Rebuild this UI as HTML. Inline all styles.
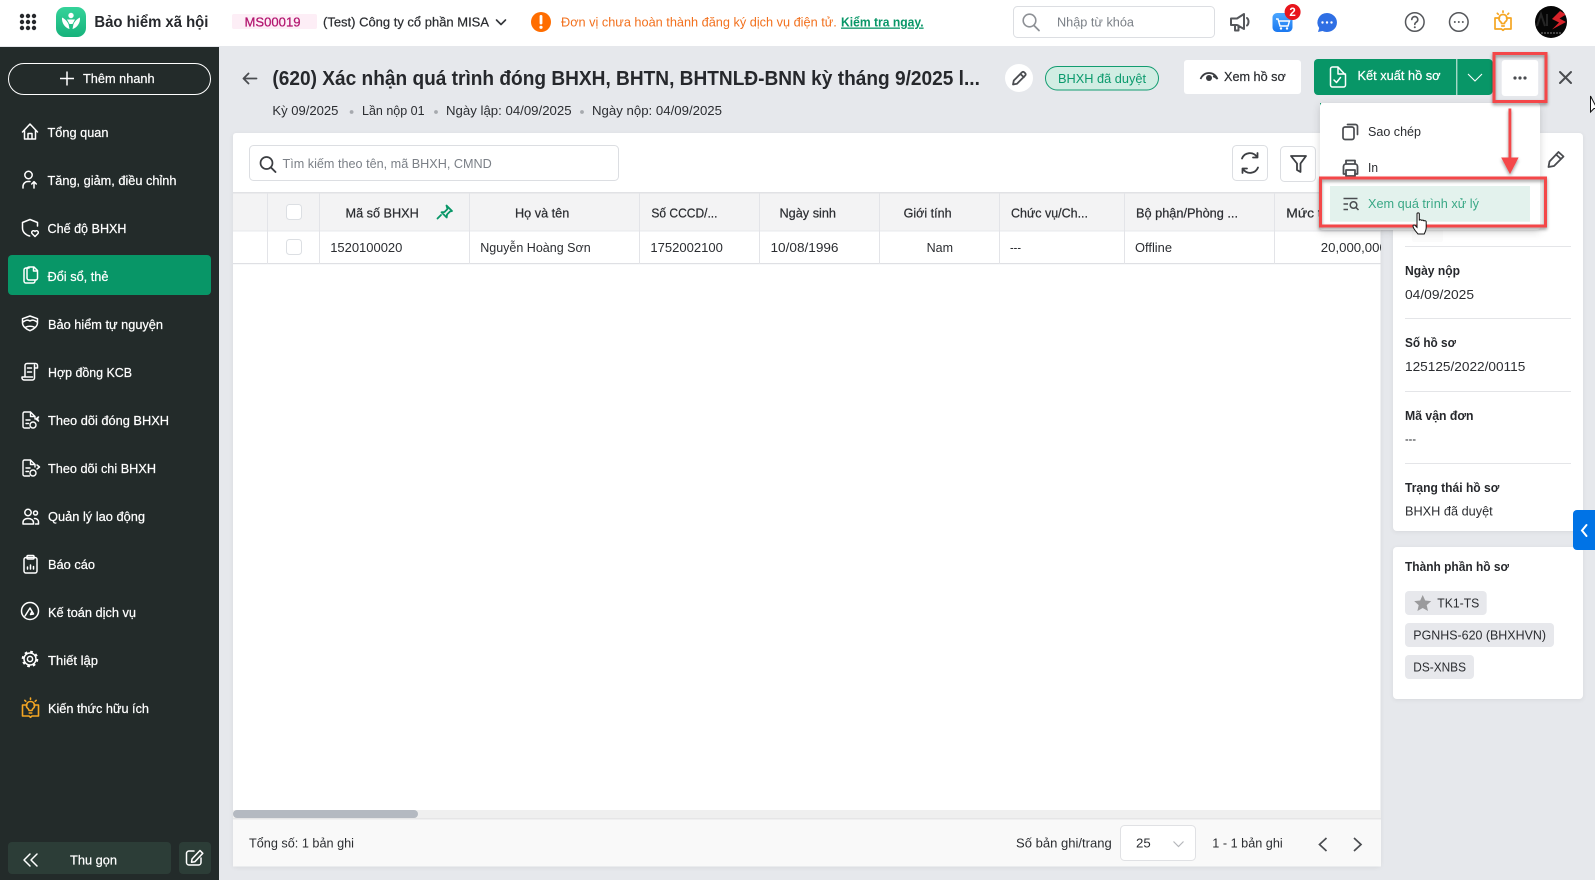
<!DOCTYPE html>
<html lang="vi">
<head>
<meta charset="utf-8">
<title>Bảo hiểm xã hội</title>
<style>
html,body{margin:0;padding:0;width:1595px;height:880px;overflow:hidden;background:#e6e8ec}
svg{display:block}
text{font-family:"Liberation Sans","Noto Sans CJK SC",sans-serif;font-size:13px;fill:#2b2d31;white-space:pre}
.w{fill:#fff;stroke:#fff;stroke-width:.22}
.m{stroke:#2b2d31;stroke-width:.22}
.b{font-weight:700;fill:#26282c}
.g{fill:#7b8087}
.i{fill:none;stroke:#fff;stroke-width:1.5;stroke-linecap:round;stroke-linejoin:round}
.k{fill:none;stroke:#4a4c50;stroke-width:1.6;stroke-linecap:round;stroke-linejoin:round}
.l{stroke:#e3e4e8;stroke-width:1}
</style>
</head>
<body>
<svg width="1595" height="880" viewBox="0 0 1595 880" xmlns="http://www.w3.org/2000/svg">
<defs>
<linearGradient id="lg" x1="0" y1="0" x2="0" y2="1"><stop offset="0" stop-color="#35d39a"/><stop offset="1" stop-color="#17b27c"/></linearGradient>
<linearGradient id="cg" x1="0" y1="0" x2="0" y2="1"><stop offset="0" stop-color="#4aa6ff"/><stop offset="1" stop-color="#1b78f0"/></linearGradient>
<filter id="sh" x="-10%" y="-10%" width="120%" height="125%"><feDropShadow dx="0" dy="2" stdDeviation="4" flood-color="#000" flood-opacity=".16"/></filter>
<filter id="sr" x="-10%" y="-10%" width="120%" height="130%"><feDropShadow dx="0" dy="2" stdDeviation="1.5" flood-color="#000" flood-opacity=".4"/></filter>
<filter id="sc" x="-5%" y="-5%" width="110%" height="110%"><feDropShadow dx="0" dy="1" stdDeviation="2" flood-color="#000" flood-opacity=".07"/></filter>
<clipPath id="tc"><rect x="233" y="133" width="1148" height="734"/></clipPath>
<clipPath id="av"><circle cx="1551" cy="22" r="16"/></clipPath>
<g id="book"><path d="M6 7H1.500v11h6.500l1.500 1.300L11 18h6.500V7H13"/><path d="M9.500 3.500a4 4 0 0 0-2.400 7.200c.6.500.9 1 .9 1.800h3c0-.8.300-1.300.9-1.800a4 4 0 0 0-2.400-7.200z"/><path d="M8.300 15h2.400M9.500 0v1.300M3.800 2.300l1 1M15.200 2.300l-1 1"/></g>
<g id="dc"><path d="M9 1H3a1.500 1.500 0 0 0-1.500 1.500v13A1.500 1.500 0 0 0 3 17h5M9 1l4.500 4.500V8M9 1v4.500h4.500M4.500 9h4M4.500 12.500h2.500"/><circle cx="11.500" cy="14" r="3"/></g>
</defs>

<!-- page background -->
<rect width="1595" height="880" fill="#e6e8ec"/>

<!-- top bar -->
<rect width="1595" height="46" fill="#fff"/>
<g fill="#26282c">
<circle cx="22" cy="16" r="2.200"/><circle cx="28" cy="16" r="2.200"/><circle cx="34" cy="16" r="2.200"/>
<circle cx="22" cy="22" r="2.200"/><circle cx="28" cy="22" r="2.200"/><circle cx="34" cy="22" r="2.200"/>
<circle cx="22" cy="28" r="2.200"/><circle cx="28" cy="28" r="2.200"/><circle cx="34" cy="28" r="2.200"/>
</g>
<rect x="56" y="7" width="30" height="30" rx="9" fill="url(#lg)"/>
<g fill="#fff"><circle cx="71" cy="15.500" r="2.700"/><path d="M62 17.500c2.500 1 5 3.500 6.500 6.500l1 5c-4-1-8-5.500-7.500-11.500zM80 17.500c-2.500 1-5 3.500-6.500 6.500l-1 5c4-1 8-5.500 7.500-11.500zM67 19.500h8l-2.500 4.500h-3z"/></g>
<text class="b" x="94.400" y="27" style="font-size:16px" textLength="114" lengthAdjust="spacingAndGlyphs">Bảo hiểm xã hội</text>
<rect x="232" y="14" width="85" height="15" rx="2" fill="#fdeef6"/>
<text x="244.500" y="26.500" style="fill:#b3156f;stroke:#b3156f;stroke-width:.25" textLength="56" lengthAdjust="spacingAndGlyphs">MS00019</text>
<text class="m" x="323" y="26.500" textLength="166" lengthAdjust="spacingAndGlyphs">(Test) Công ty cổ phần MISA</text>
<path d="M496.500 20l4.500 4.500 4.500-4.500" class="k" style="stroke:#33363a"/>
<circle cx="541" cy="22" r="10" fill="#ff6d00"/>
<rect x="539.600" y="15" width="2.800" height="9.500" rx="1.200" fill="#fff"/><circle cx="541" cy="27.300" r="1.600" fill="#fff"/>
<text x="561" y="26.500" style="fill:#f2701d" textLength="275.800" lengthAdjust="spacingAndGlyphs">Đơn vị chưa hoàn thành đăng ký dịch vụ điện tử.</text>
<text x="841" y="26.500" style="fill:#089667;font-weight:700;text-decoration:underline" textLength="82.600" lengthAdjust="spacingAndGlyphs">Kiểm tra ngay.</text>

<rect x="1013.500" y="6.500" width="201" height="31" rx="4" fill="#fff" stroke="#dcdee2"/>
<circle cx="1029.500" cy="20.500" r="6.300" fill="none" stroke="#8d9095" stroke-width="1.600"/><path d="M1034 25.500l5 5" stroke="#8d9095" stroke-width="1.800" stroke-linecap="round"/>
<text class="g" x="1057" y="26.500" textLength="77" lengthAdjust="spacingAndGlyphs">Nhập từ khóa</text>

<g class="k" style="stroke-width:2;stroke:#55575b"><path d="M1231 18.500h6l7-4.500v15l-7-4h-6zM1235 25.500v5h3.500v-5M1247 18c2 1.500 2 6 0 7.500"/></g>
<rect x="1272.500" y="13" width="20" height="19" rx="4.500" fill="url(#cg)"/>
<path d="M1276 19h2l2 7h8l1.500-5H1279" fill="none" stroke="#fff" stroke-width="1.400"/><circle cx="1281" cy="28.500" r="1.200" fill="#fff"/><circle cx="1287" cy="28.500" r="1.200" fill="#fff"/>
<circle cx="1292.600" cy="12" r="8" fill="#e8151c"/>
<text x="1292.600" y="16" text-anchor="middle" style="fill:#fff;font-weight:700;font-size:11.500px">2</text>
<path d="M1327 13a10 9.500 0 1 1-4.500 18l-4.500 1 1.200-4a9.500 9.500 0 0 1 7.800-15z" fill="#2f6fe4"/>
<g fill="#fff"><circle cx="1322.500" cy="22.500" r="1.200"/><circle cx="1327" cy="22.500" r="1.200"/><circle cx="1331.500" cy="22.500" r="1.200"/></g>

<circle cx="1414.800" cy="22" r="9.300" fill="none" stroke="#55575b" stroke-width="1.500"/>
<path d="M1411.800 19.500a3 3 0 1 1 4.600 2.600c-1 .6-1.600 1.100-1.600 2.300" fill="none" stroke="#55575b" stroke-width="1.600" stroke-linecap="round"/><circle cx="1414.800" cy="27.200" r="1" fill="#55575b"/>
<circle cx="1458.800" cy="22" r="9.300" fill="none" stroke="#55575b" stroke-width="1.500"/>
<g fill="#55575b"><circle cx="1454.800" cy="22" r="1"/><circle cx="1458.800" cy="22" r="1"/><circle cx="1462.800" cy="22" r="1"/></g>
<use href="#book" x="1493.500" y="11" fill="none" stroke="#f5a623" stroke-width="1.700" stroke-linecap="round" stroke-linejoin="round"/>
<circle cx="1551" cy="22" r="16" fill="#060606"/>
<g clip-path="url(#av)"><path d="M1560 11l-8 8 7 3.500-7 7 14-7.500-6.500-3.500 6.500-4z" fill="#d8232a"/><path d="M1537 26l4-12 4 12M1547 14v12" fill="none" stroke="#252525" stroke-width="2"/><path d="M1541 33h20" stroke="#444" stroke-width="2" stroke-dasharray="2 1"/></g>

<!-- sidebar -->
<rect x="0" y="47" width="219" height="833" fill="#232b2a"/>
<rect x="8.500" y="63.500" width="202" height="31" rx="15.500" fill="none" stroke="#fff"/>
<path d="M60 78.500h14M67 71.500v14" stroke="#fff" stroke-width="1.500"/>
<text class="w" x="83" y="83" textLength="71.600" lengthAdjust="spacingAndGlyphs">Thêm nhanh</text>
<rect x="8" y="255" width="203" height="40" rx="4" fill="#089667"/>

<g class="i">
<path d="M22.500 132L30 124l7.500 8M24.500 130v9h11v-9M28 139v-5.500h4v5.500"/>
<circle cx="28.500" cy="175" r="3.700"/><path d="M23 188v-1.500a5 5 0 0 1 5-5h2M34 188v-6M31.700 184l2.300-2.300 2.300 2.300"/>
<path d="M30 219.500l-7.500 3v5.500c0 4 3 7 7.200 8M37.500 226v-3.500L30 219.500"/><path d="M35 236.500l-3-3a1.800 1.800 0 0 1 3-2 1.800 1.800 0 0 1 3 2z"/>
<path d="M29 268h-3a2 2 0 0 0-2 2v11a2 2 0 0 0 2 2h7a2 2 0 0 0 2-2v-1"/><path d="M29 267h5l3.500 3.500V278a2 2 0 0 1-2 2H29a2 2 0 0 1-2-2v-9a2 2 0 0 1 2-2zM33.500 267v4h4"/>
<path d="M30 316l7.500 2.700v4c0 3.500-3.500 6.500-7.500 8-4-1.500-7.500-4.500-7.500-8v-4zM23 322c3-2 4.500-2.500 7-1 2.500-1.500 4-1 7 1M26 327c2-1 6-1 8 0"/>
<path d="M25 377v-11.500a2 2 0 0 1 2-2h8.500a2 2 0 0 1 2 2v2.500h-3M34.500 365v13c0 1-1 2-2 2h-8c-1.500 0-2.500-1-2.500-2v-1h10.500M27.500 368h4M27.500 372h4"/>
<use href="#dc" x="21.500" y="411" style="stroke-width:1.400"/><path d="M38.500 417l-2.500 2 2.500 2M36 419h2"/>
<use href="#dc" x="21.500" y="459" style="stroke-width:1.400"/><path d="M37 465l2.500 2-2.500 2"/>
<circle cx="28" cy="512.500" r="3.200"/><circle cx="35.500" cy="513" r="2"/><path d="M23 524v-1.500c0-2.500 2-4 5-4s5.500 1.500 5.500 4v1.500zM34.500 518.500c2.500 0 4 1.500 4 3.500v2h-3"/>
<rect x="24" y="557.500" width="13" height="15.500" rx="2"/><rect x="27" y="555.500" width="7" height="3.500" rx="1"/><path d="M27.500 569v-2M30.500 569v-4M33.500 569v-2.500"/>
<circle cx="30" cy="611" r="8.500"/><path d="M25 616l5-8 3.500 6-3 .5 1-2"/>
<circle cx="30" cy="659" r="6"/><circle cx="30" cy="659" r="7.300" style="stroke-width:2;stroke-dasharray:2.700 3.030;stroke-linecap:butt"/><circle cx="30" cy="659" r="2.600"/>
</g>
<use href="#book" x="21" y="698" fill="none" stroke="#f5a623" stroke-width="1.600" stroke-linecap="round" stroke-linejoin="round"/>

<text class="w" x="47.500" y="137" textLength="61" lengthAdjust="spacingAndGlyphs">Tổng quan</text>
<text class="w" x="47.500" y="185" textLength="129" lengthAdjust="spacingAndGlyphs">Tăng, giảm, điều chỉnh</text>
<text class="w" x="47.500" y="233" textLength="79" lengthAdjust="spacingAndGlyphs">Chế độ BHXH</text>
<text class="w" x="47.500" y="281" textLength="61" lengthAdjust="spacingAndGlyphs">Đổi sổ, thẻ</text>
<text class="w" x="48" y="328.800" textLength="115" lengthAdjust="spacingAndGlyphs">Bảo hiểm tự nguyện</text>
<text class="w" x="48" y="377" textLength="84" lengthAdjust="spacingAndGlyphs">Hợp đồng KCB</text>
<text class="w" x="48" y="424.800" textLength="121" lengthAdjust="spacingAndGlyphs">Theo dõi đóng BHXH</text>
<text class="w" x="48" y="472.800" textLength="108" lengthAdjust="spacingAndGlyphs">Theo dõi chi BHXH</text>
<text class="w" x="48" y="520.800" textLength="97" lengthAdjust="spacingAndGlyphs">Quản lý lao động</text>
<text class="w" x="48" y="568.800" textLength="47" lengthAdjust="spacingAndGlyphs">Báo cáo</text>
<text class="w" x="48" y="617" textLength="88" lengthAdjust="spacingAndGlyphs">Kế toán dịch vụ</text>
<text class="w" x="48" y="664.800" textLength="50" lengthAdjust="spacingAndGlyphs">Thiết lập</text>
<text class="w" x="48" y="712.800" textLength="101" lengthAdjust="spacingAndGlyphs">Kiến thức hữu ích</text>

<rect x="8" y="842" width="163" height="32" rx="4" fill="#2c3d37"/>
<rect x="179" y="842" width="32" height="32" rx="4" fill="#2c3d37"/>
<g class="i"><path d="M30 854l-6 6 6 6M37 854l-6 6 6 6"/><path d="M194 851h-5a2.500 2.500 0 0 0-2.500 2.500v9a2.500 2.500 0 0 0 2.500 2.500h9.500a2.500 2.500 0 0 0 2.500-2.500V858"/><path d="M192 859l8-8.500 2.800 2.800-8 8.500-3.300.4z"/></g>
<text class="w" x="70" y="864.300" textLength="47" lengthAdjust="spacingAndGlyphs">Thu gọn</text>

<!-- page title row -->
<path d="M243.500 78.500h13M248.500 73.500l-5 5 5 5" fill="none" stroke="#4a4c50" stroke-width="1.800" stroke-linecap="round" stroke-linejoin="round"/>
<text x="272.400" y="85" style="font-size:20px;font-weight:700;fill:#26282c" textLength="707.500" lengthAdjust="spacingAndGlyphs">(620) Xác nhận quá trình đóng BHXH, BHTN, BHTNLĐ-BNN kỳ tháng 9/2025 l...</text>
<text x="272.400" y="115" textLength="66" lengthAdjust="spacingAndGlyphs">Kỳ 09/2025</text>
<circle cx="351.600" cy="112" r="1.900" fill="#a6a9ae"/>
<text x="362" y="115" textLength="62.600" lengthAdjust="spacingAndGlyphs">Lần nộp 01</text>
<circle cx="436" cy="112" r="1.900" fill="#a6a9ae"/>
<text x="446" y="115" textLength="125.600" lengthAdjust="spacingAndGlyphs">Ngày lập: 04/09/2025</text>
<circle cx="582" cy="112" r="1.900" fill="#a6a9ae"/>
<text x="592" y="115" textLength="130" lengthAdjust="spacingAndGlyphs">Ngày nộp: 04/09/2025</text>

<circle cx="1019" cy="78" r="14" fill="#fff"/>
<path d="M1013 84.500l.8-4 8.200-8.200a1.500 1.500 0 0 1 2.200 0l1 1a1.500 1.500 0 0 1 0 2.200l-8.200 8.200zM1020.500 74l3.300 3.300" class="k" style="stroke-width:1.800"/>
<rect x="1045.500" y="66.500" width="113" height="23.500" rx="11.700" fill="#d1ede3" stroke="#129c70"/>
<text x="1058" y="83" style="fill:#0a9a6c" textLength="88" lengthAdjust="spacingAndGlyphs">BHXH đã duyệt</text>

<rect x="1184" y="60" width="117" height="34" rx="3" fill="#fff"/>
<path d="M1200.500 79c2-4.500 5.500-6 8.500-6s6.500 1.500 8.500 6c-1.500-1.500-3-2.300-4.500-2.800" fill="none" stroke="#3a3c40" stroke-width="1.700"/>
<circle cx="1209" cy="78" r="3" fill="#3a3c40"/>
<text class="m" x="1224" y="81" textLength="61.800" lengthAdjust="spacingAndGlyphs">Xem hồ sơ</text>

<rect x="1314" y="59" width="178.600" height="36" rx="4" fill="#089667"/>
<rect x="1456.300" y="59" width="1" height="36" fill="#e8f5f0"/>
<rect x="1320" y="103" width="1" height="3" fill="#089667"/>
<g class="i"><path d="M1338 67h-5.500a2 2 0 0 0-2 2v16a2 2 0 0 0 2 2h11a2 2 0 0 0 2-2V75zM1338 67v7h7.500M1334 80l2.500 2.500 4-5"/></g>
<text class="w" x="1357.500" y="80" textLength="83" lengthAdjust="spacingAndGlyphs">Kết xuất hồ sơ</text>
<path d="M1468 74l7 7 7-7" fill="none" stroke="#fff" stroke-width="1.100"/>

<rect x="1501.700" y="60" width="36.500" height="36" rx="3" fill="#fff"/>
<g fill="#4a4c50"><circle cx="1515" cy="78" r="1.600"/><circle cx="1520" cy="78" r="1.600"/><circle cx="1525" cy="78" r="1.600"/></g>
<path d="M1560 72l11 11M1571 72l-11 11" stroke="#4a4c50" stroke-width="2" stroke-linecap="round"/>
<path d="M1590.500 96v16l3.500-3.500h3L1590.500 96z" fill="#fff" stroke="#111" stroke-width="1"/>

<!-- table card -->
<rect x="233" y="133" width="1147.500" height="733.500" rx="3" fill="#fff" filter="url(#sc)"/>
<rect x="249.500" y="145.500" width="369" height="35" rx="4" fill="#fff" stroke="#dcdee2"/>
<circle cx="266.500" cy="163" r="6" fill="none" stroke="#3c3e42" stroke-width="1.700"/><path d="M271 167.500l4.500 4.500" stroke="#3c3e42" stroke-width="1.900" stroke-linecap="round"/>
<text class="g" x="282.500" y="168" textLength="209.300" lengthAdjust="spacingAndGlyphs">Tìm kiếm theo tên, mã BHXH, CMND</text>
<rect x="1232.500" y="145.500" width="35" height="35" rx="4" fill="#fff" stroke="#dcdee2"/>
<g class="k" style="stroke:#3c3e42;stroke-width:1.800"><path d="M1242 158.500a8.500 8.500 0 0 1 15-1.500M1258 167.500a8.500 8.500 0 0 1-15 1.500M1257.500 153v4.500h-4.500M1242.500 173v-4.500h4.500"/></g>
<rect x="1280.500" y="146.500" width="35" height="35" rx="4" fill="#fff" stroke="#dcdee2"/>
<path d="M1291 156h15l-5.500 7.500v8.500l-3.500-2v-6.500z" class="k" style="stroke:#3c3e42;stroke-width:1.800"/>

<g clip-path="url(#tc)">
<rect x="233" y="193" width="1148" height="38" fill="#f3f3f4"/>
<rect x="233" y="192" width="1148" height="1.500" fill="#e1e2e5"/>
<rect x="233" y="230.500" width="1148" height="1" fill="#e7e8ec"/>
<rect x="233" y="263" width="1148" height="1.200" fill="#dfe0e4"/>
<g class="l">
<path d="M267.500 193v71M319.500 193v71M469.500 193v71M639.500 193v71M759.500 193v71M879.500 193v71M999.500 193v71M1124.500 193v71M1274.500 193v71"/>
</g>
<rect x="286.500" y="204.500" width="15" height="15" rx="3" fill="#fff" stroke="#dcdfe3"/>
<rect x="286.500" y="239.500" width="15" height="15" rx="3" fill="#fff" stroke="#dcdfe3"/>
<text class="m" x="345.500" y="217.300" textLength="73.300" lengthAdjust="spacingAndGlyphs">Mã số BHXH</text>
<path d="M446.500 205.500l5.500 5.500-2 .5-3 3-.3 3-5.200-5.200 3-.3 3-3zM441 215l-3.500 3.500" fill="none" stroke="#089667" stroke-width="1.800" stroke-linejoin="round" stroke-linecap="round"/>
<text class="m" x="515" y="217.300" textLength="54.300" lengthAdjust="spacingAndGlyphs">Họ và tên</text>
<text class="m" x="651.400" y="217.300" textLength="66.100" lengthAdjust="spacingAndGlyphs">Số CCCD/...</text>
<text class="m" x="779.500" y="217.300" textLength="56.500" lengthAdjust="spacingAndGlyphs">Ngày sinh</text>
<text class="m" x="903.600" y="217.300" textLength="48" lengthAdjust="spacingAndGlyphs">Giới tính</text>
<text class="m" x="1011" y="217.300" textLength="77" lengthAdjust="spacingAndGlyphs">Chức vụ/Ch...</text>
<text class="m" x="1136" y="217.300" textLength="102" lengthAdjust="spacingAndGlyphs">Bộ phận/Phòng ...</text>
<text class="m" x="1286.300" y="217.300" textLength="54" lengthAdjust="spacingAndGlyphs">Mức tiền</text>
<text x="330.200" y="252" textLength="72.200" lengthAdjust="spacingAndGlyphs">1520100020</text>
<text x="480.200" y="252" textLength="110.500" lengthAdjust="spacingAndGlyphs">Nguyễn Hoàng Sơn</text>
<text x="650.400" y="252" textLength="72.500" lengthAdjust="spacingAndGlyphs">1752002100</text>
<text x="770.500" y="252" textLength="68" lengthAdjust="spacingAndGlyphs">10/08/1996</text>
<text x="926.600" y="252" textLength="26.400" lengthAdjust="spacingAndGlyphs">Nam</text>
<text x="1010" y="252" textLength="11" lengthAdjust="spacingAndGlyphs">---</text>
<text x="1135" y="252" textLength="37" lengthAdjust="spacingAndGlyphs">Offline</text>
<text x="1320.800" y="252" textLength="66" lengthAdjust="spacingAndGlyphs">20,000,000</text>
<rect x="233" y="810" width="1148" height="8" fill="#efefef"/>
<rect x="233" y="810" width="185" height="8" rx="4" fill="#b4b9c1"/>
<rect x="233" y="819" width="1148" height="47.500" fill="#f9f9f9"/>
<rect x="233" y="818" width="1148" height="1.500" fill="#e5e5e6"/>
</g>
<text x="249" y="847.500" textLength="105" lengthAdjust="spacingAndGlyphs">Tổng số: 1 bản ghi</text>
<text x="1016" y="847.500" textLength="95.700" lengthAdjust="spacingAndGlyphs">Số bản ghi/trang</text>
<rect x="1120.500" y="825.500" width="75" height="35" rx="4" fill="#fff" stroke="#e0e1e4"/>
<text x="1136" y="847.500" textLength="14.700" lengthAdjust="spacingAndGlyphs">25</text>
<path d="M1173.500 841.500l5 5 5-5" fill="none" stroke="#b5b7bb" stroke-width="1.200"/>
<text x="1212.300" y="847.500" textLength="70.400" lengthAdjust="spacingAndGlyphs">1 - 1 bản ghi</text>
<path d="M1326.500 838l-7 6.500 7 6.500M1354 838l7 6.500-7 6.500" fill="none" stroke="#4a4c50" stroke-width="1.700"/>

<!-- right info panel -->
<rect x="1393" y="133" width="190" height="398" rx="4" fill="#fff" filter="url(#sc)"/>
<rect x="1393" y="547" width="190" height="152" rx="4" fill="#fff" filter="url(#sc)"/>
<path d="M1548.500 167l1-5.500 9-9.500 5 4.500-9.500 9.500zM1556 154.500l5 4.500" class="k" style="stroke-width:1.800"/>
<rect x="1412" y="226" width="31" height="16" rx="2" fill="#fbfbfb"/>
<path d="M1405 246.500h166M1405 318.500h166M1405 391.500h166M1405 463.500h166" stroke="#e4e5e8"/>
<text class="b" x="1405" y="274.800" textLength="55" lengthAdjust="spacingAndGlyphs">Ngày nộp</text>
<text x="1405" y="299" textLength="69" lengthAdjust="spacingAndGlyphs">04/09/2025</text>
<text class="b" x="1405" y="346.800" textLength="51" lengthAdjust="spacingAndGlyphs">Số hồ sơ</text>
<text x="1405" y="371" textLength="120.300" lengthAdjust="spacingAndGlyphs">125125/2022/00115</text>
<text class="b" x="1405" y="419.800" textLength="68.500" lengthAdjust="spacingAndGlyphs">Mã vận đơn</text>
<text x="1405" y="443.300" textLength="11" lengthAdjust="spacingAndGlyphs">---</text>
<text class="b" x="1405" y="491.800" textLength="94.300" lengthAdjust="spacingAndGlyphs">Trạng thái hồ sơ</text>
<text x="1405" y="515.300" textLength="87.700" lengthAdjust="spacingAndGlyphs">BHXH đã duyệt</text>
<text class="b" x="1405" y="570.800" textLength="104" lengthAdjust="spacingAndGlyphs">Thành phần hồ sơ</text>
<rect x="1405" y="591" width="81.700" height="24" rx="4" fill="#e7e8ec"/>
<path d="M1422.700 595l2.500 5.500 6 .6-4.500 4 1.300 5.900-5.300-3-5.300 3 1.300-5.900-4.500-4 6-.6z" fill="#9a9a9c"/>
<text x="1437.300" y="607.300" textLength="42" lengthAdjust="spacingAndGlyphs">TK1-TS</text>
<rect x="1405" y="623" width="149" height="24" rx="4" fill="#e7e8ec"/>
<text x="1413.300" y="639.300" textLength="132.700" lengthAdjust="spacingAndGlyphs">PGNHS-620 (BHXHVN)</text>
<rect x="1405" y="655" width="69" height="24" rx="4" fill="#e7e8ec"/>
<text x="1413.300" y="671.300" textLength="52.700" lengthAdjust="spacingAndGlyphs">DS-XNBS</text>
<path d="M1595 510h-18a4 4 0 0 0-4 4v32a4 4 0 0 0 4 4h18z" fill="#0073e6"/>
<path d="M1586.500 525l-4.500 5.500 4.500 5.500" fill="none" stroke="#fff" stroke-width="2" stroke-linecap="round"/>

<!-- dropdown menu -->
<rect x="1320" y="103" width="220" height="127" rx="3" fill="#fff" filter="url(#sh)"/>
<g class="k" style="stroke-width:1.700"><rect x="1343" y="127" width="11" height="12.500" rx="2"/><path d="M1347.500 124.500h8a2 2 0 0 1 2 2v8"/></g>
<text x="1368" y="135.800" textLength="53" lengthAdjust="spacingAndGlyphs">Sao chép</text>
<g class="k" style="stroke-width:1.800"><path d="M1346 164v-3.500h9v3.500M1346 174h-2.500v-7.500a2.500 2.500 0 0 1 2.500-2.500h9a2.500 2.500 0 0 1 2.500 2.500v7.500H1355"/><rect x="1346" y="170" width="9" height="6"/></g>
<text x="1368" y="171.800" textLength="10" lengthAdjust="spacingAndGlyphs">In</text>
<rect x="1330" y="186" width="200" height="35.700" fill="#e3f2ed"/>
<path d="M1343.500 198.500h14M1343.500 204h4.500M1343.500 209.500h4.500" stroke="#4a4c50" stroke-width="1.500"/>
<circle cx="1353.500" cy="205" r="3.300" fill="none" stroke="#4a4c50" stroke-width="1.500"/><path d="M1356 207.500l2.500 2.500" stroke="#4a4c50" stroke-width="1.500"/>
<text x="1368" y="207.800" style="fill:#3aa886" textLength="111" lengthAdjust="spacingAndGlyphs">Xem quá trình xử lý</text>

<!-- annotation callouts -->
<g filter="url(#sr)">
<rect x="1494" y="53.500" width="52" height="48" fill="none" stroke="#f4474a" stroke-width="3"/>
<rect x="1320.500" y="178" width="225" height="48" fill="none" stroke="#f4474a" stroke-width="3"/>
<path d="M1509 109h1.800v49h7l-7.800 15-8-15h7z" fill="#f4474a" stroke="#f4474a"/>
</g>
<path d="M1418 234c-2.500-3-5-5.500-5-8 0-1.200 1.700-1.400 2.700 0l1.300 1.300v-13.300c0-1.500 2.300-1.500 2.300 0v6.500c.3-1.100 2.300-1.100 2.300.3.300-1.100 2.300-.9 2.300.4.300-.9 2.300-.7 2.300.7v5.600c0 2.700-1 4.500-2 6.500z" fill="#fff" stroke="#111" stroke-width="1"/>
</svg>
</body>
</html>
